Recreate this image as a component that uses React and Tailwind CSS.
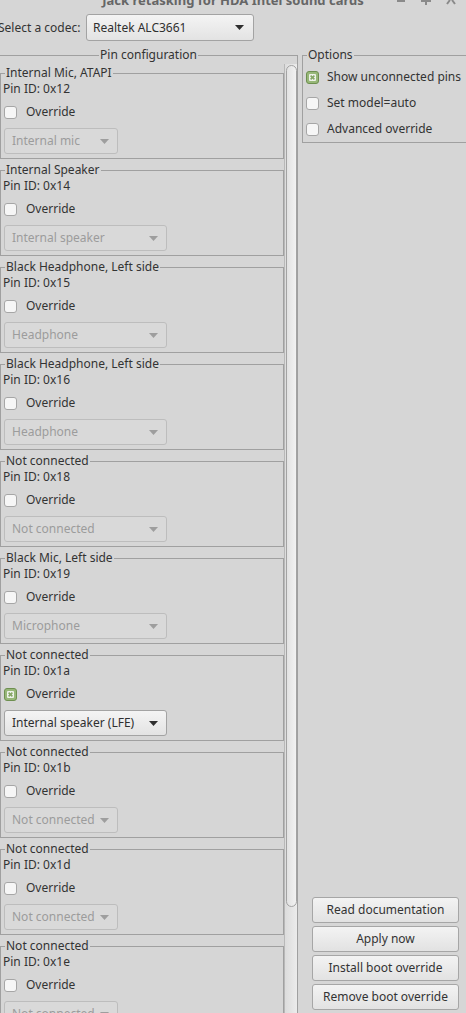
import React from 'react';

const font = { fontFamily: '"Noto Sans", "Open Sans", sans-serif' };

const pins = [
    { title: 'Internal Mic, ATAPI', id: '0x12', value: 'Internal mic', wide: false },
    { title: 'Internal Speaker', id: '0x14', value: 'Internal speaker', wide: true },
    { title: 'Black Headphone, Left side', id: '0x15', value: 'Headphone', wide: true },
    { title: 'Black Headphone, Left side', id: '0x16', value: 'Headphone', wide: true },
    { title: 'Not connected', id: '0x18', value: 'Not connected', wide: true },
    { title: 'Black Mic, Left side', id: '0x19', value: 'Microphone', wide: true },
    { title: 'Not connected', id: '0x1a', value: 'Internal speaker (LFE)', wide: true, on: true },
    { title: 'Not connected', id: '0x1b', value: 'Not connected', wide: false },
    { title: 'Not connected', id: '0x1d', value: 'Not connected', wide: false },
    { title: 'Not connected', id: '0x1e', value: 'Not connected', wide: false },
];

const Arrow = ({ color }) => (
    <svg width="9" height="5" viewBox="0 0 9 5" className="shrink-0">
        <path d="M0 0 H9 L4.5 5 Z" fill={color} />
    </svg>
);

const Check = ({ checked }) =>
    checked ? (
        <svg width="13" height="13" viewBox="0 0 13 13" className="shrink-0">
            <rect x="0.5" y="0.5" width="12" height="12" rx="2.5" fill="#97b778" stroke="#6e8f50" />
            <rect x="3" y="3" width="7" height="7" rx="1" fill="#eef2ea" />
            <path d="M4.6 4.6 L8.4 8.4 M8.4 4.6 L4.6 8.4" stroke="#86a766" strokeWidth="1.6" />
        </svg>
    ) : (
        <div className="w-[13px] h-[13px] shrink-0 rounded-[3px] border border-[#a6a6a6] bg-[#f6f6f6]" />
    );

const Combo = ({ value, enabled, wide }) => (
    <div
        className={`h-[26px] flex items-center justify-between gap-[4px] pl-[7px] pr-[8px] rounded-[3px] border whitespace-nowrap ${
            wide ? 'w-[163px]' : 'w-[114px]'
        } ${
            enabled
                ? 'border-[#a3a3a3] bg-gradient-to-b from-[#f4f4f4] to-[#e3e3e3] text-[#2f2f2f]'
                : 'border-[#bdbdbd] bg-[#d9d9d9] text-[#9c9c9c]'
        }`}
    >
        <span>{value}</span>
        <Arrow color={enabled ? '#2e2e2e' : '#9e9e9e'} />
    </div>
);

const PinGroup = ({ pin }) => (
    <fieldset className="mb-[2px] border border-[#a0a0a0] pb-[4px]">
        <legend className="ml-[4px] px-px leading-[18px]">{pin.title}</legend>
        <div className="pl-[2px] leading-[14px]">Pin ID: {pin.id}</div>
        <div className="mt-[6px] h-[20px] flex items-center gap-[9px] pl-[3px]">
            <Check checked={pin.on} />
            <span>Override</span>
        </div>
        <div className="mt-[6px] pl-[3px]">
            <Combo value={pin.value} enabled={pin.on} wide={pin.wide} />
        </div>
    </fieldset>
);

const Button = ({ children }) => (
    <div className="h-[26px] flex items-center justify-center rounded-[3px] border border-[#a6a6a6] bg-gradient-to-b from-[#f3f3f3] to-[#e2e2e2] text-[#333] whitespace-nowrap">
        {children}
    </div>
);

export default function App() {
    return (
        <div className="w-[466px] h-[1013px] overflow-hidden bg-[#d6d6d6] text-[12px] text-[#333] flex flex-col" style={font}>
            {/* Title bar, cut off at the top */}
            <div className="relative h-[10px] overflow-hidden shrink-0">
                <div className="mt-[-9px] text-center font-bold text-[13px] leading-[18px] text-[#666] whitespace-nowrap">
                    Jack retasking for HDA Intel sound cards
                </div>
                <div className="absolute top-0 left-[397px] w-[8px] h-[2px] bg-[#8a8a8a]" />
                <svg className="absolute top-0 left-[421px]" width="10" height="5" viewBox="0 0 10 5">
                    <path d="M0 1 H10 M5 0 V5" stroke="#8a8a8a" strokeWidth="2" />
                </svg>
                <svg className="absolute top-0 left-[446px]" width="10" height="5" viewBox="0 0 10 5">
                    <path d="M1 4 L4 0 M9 4 L6 0" stroke="#8a8a8a" strokeWidth="2" />
                </svg>
            </div>

            {/* Codec selector */}
            <div className="mt-[4px] h-[27px] flex items-center shrink-0">
                <span className="ml-[-2px] w-[88px] shrink-0 whitespace-nowrap">Select a codec:</span>
                <div className="w-[168px] h-[27px] flex items-center justify-between pl-[6px] pr-[9px] rounded-[3px] border border-[#a3a3a3] bg-gradient-to-b from-[#f4f4f4] to-[#e3e3e3] text-[#2f2f2f]">
                    <span>Realtek ALC3661</span>
                    <Arrow color="#2e2e2e" />
                </div>
            </div>

            <div className="mt-[5px] flex-1 min-h-0 flex">
                {/* Pin configuration */}
                <fieldset className="w-[298px] shrink-0 border-t border-r border-[#a0a0a0] overflow-hidden">
                    <legend className="mx-auto px-px leading-[18px]">Pin configuration</legend>
                    <div className="flex h-[960px]">
                        <div className="w-[284px] shrink-0">
                            {pins.map((pin) => (
                                <PinGroup key={pin.id} pin={pin} />
                            ))}
                        </div>
                        <div className="w-[13px] shrink-0 pt-px bg-gradient-to-r from-[#dcdcdc] to-[#ececec] border-l border-[#b8b8b8]">
                            <div className="ml-px w-[11px] h-[842px] rounded-full border border-[#a3a3a3] bg-gradient-to-r from-[#e2e2e2] to-[#f2f2f2]" />
                        </div>
                    </div>
                </fieldset>

                {/* Options + actions */}
                <div className="flex-1 flex flex-col pl-[4px]">
                    <fieldset className="border-t border-l border-b border-[#a0a0a0]">
                        <legend className="ml-[4px] px-px leading-[18px]">Options</legend>
                        <div className="h-[26px] flex items-center gap-[8px] pl-[3px] whitespace-nowrap">
                            <Check checked />
                            <span>Show unconnected pins</span>
                        </div>
                        <div className="h-[26px] flex items-center gap-[8px] pl-[3px] whitespace-nowrap">
                            <Check />
                            <span>Set model=auto</span>
                        </div>
                        <div className="h-[26px] flex items-center gap-[8px] pl-[3px] whitespace-nowrap">
                            <Check />
                            <span>Advanced override</span>
                        </div>
                    </fieldset>

                    <div className="mt-auto mb-[3px] ml-[10px] w-[147px] flex flex-col gap-[3px]">
                        <Button>Read documentation</Button>
                        <Button>Apply now</Button>
                        <Button>Install boot override</Button>
                        <Button>Remove boot override</Button>
                    </div>
                </div>
            </div>
        </div>
    );
}
